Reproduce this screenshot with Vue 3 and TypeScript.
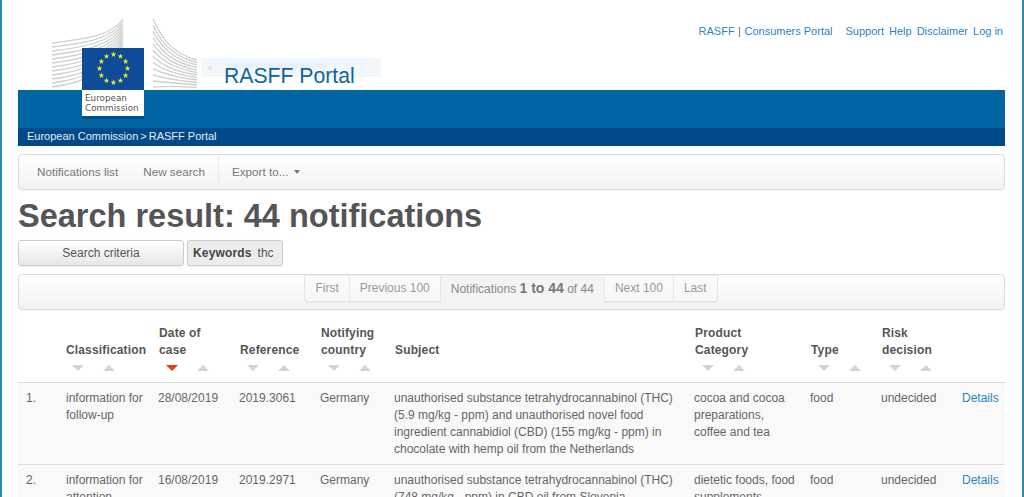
<script setup lang="ts">
interface Row { n: string; cls: string[]; date: string; ref: string; country: string; subject: string[]; cat: string[]; type: string; risk: string }
const columns = [
  { label: ['Classification'], active: false },
  { label: ['Date of', 'case'], active: true },
  { label: ['Reference'], active: false },
  { label: ['Notifying', 'country'], active: false },
  { label: ['Subject'], active: false, noSort: true },
  { label: ['Product', 'Category'], active: false },
  { label: ['Type'], active: false },
  { label: ['Risk', 'decision'], active: false },
]
const rows: Row[] = [
  {
    n: '1.', cls: ['information for', 'follow-up'], date: '28/08/2019', ref: '2019.3061', country: 'Germany',
    subject: ['unauthorised substance tetrahydrocannabinol (THC)', '(5.9 mg/kg - ppm) and unauthorised novel food', 'ingredient cannabidiol (CBD) (155 mg/kg - ppm) in', 'chocolate with hemp oil from the Netherlands'],
    cat: ['cocoa and cocoa', 'preparations,', 'coffee and tea'], type: 'food', risk: 'undecided',
  },
  {
    n: '2.', cls: ['information for', 'attention'], date: '16/08/2019', ref: '2019.2971', country: 'Germany',
    subject: ['unauthorised substance tetrahydrocannabinol (THC)', '(748 mg/kg - ppm) in CBD oil from Slovenia'],
    cat: ['dietetic foods, food', 'supplements,'], type: 'food', risk: 'undecided',
  },
]
const stars = Array.from({ length: 12 }, (_, i) => {
  const a = (i * Math.PI) / 6
  return { x: 113.5 + 14 * Math.sin(a), y: 68.5 - 14 * Math.cos(a) }
})
const lines = Array.from({ length: 12 }, (_, i) => i)
</script>

<template>
  <div class="page">
    <header class="head">
      <svg class="logo" width="160" height="112" viewBox="40 10 160 112" aria-hidden="true">
        <g fill="none" stroke="#cfcfcf" stroke-width="1.3">
          <path v-for="i in lines" :key="'l' + i" :d="`M52 ${43 + i * 4} C 85 ${39 + i * 4} 112 ${36 + i * 3} 123 ${19 + i * 2.5}`" />
          <path v-for="i in lines" :key="'r' + i" :d="`M197 ${60 + i * 2.5} C 175 ${54 + i * 2.9} 163 ${42 + i * 4} 153 ${19 + i * 6.2}`" />
        </g>
        <rect x="82" y="48" width="62" height="42" fill="#0f4c97" />
        <rect x="82" y="90" width="62" height="26" fill="#fff" />
        <rect x="82" y="116" width="62" height="3" fill="#00508f" />
        <polygon v-for="(s, i) in stars" :key="i" fill="#f4e92c"
          :transform="`translate(${s.x} ${s.y}) scale(3)`"
          points="0,-1 0.24,-0.31 0.95,-0.31 0.38,0.12 0.59,0.81 0,0.4 -0.59,0.81 -0.38,0.12 -0.95,-0.31 -0.24,-0.31" />
      </svg>
      <div class="logo-text">European<br />Commission</div>
      <div class="ghost"><span class="ghost-dot"></span><span class="ghost-bar"></span></div>
      <div class="site-title">RASFF Portal</div>
      <nav class="toplinks">
        <a>RASFF</a><span class="sep">|</span><a>Consumers Portal</a>
        <a class="gap-l">Support</a><a>Help</a><a>Disclaimer</a><a>Log in</a>
      </nav>
    </header>
    <div class="band"></div>
    <div class="crumbs">European Commission<span class="chev">&gt;</span>RASFF Portal</div>

    <div class="navbar">
      <a class="nav-item">Notifications list</a>
      <a class="nav-item second">New search</a>
      <span class="divider"></span>
      <a class="nav-item export">Export to...<span class="caret"></span></a>
    </div>

    <h1>Search result: 44 notifications</h1>

    <div class="criteria">
      <button class="btn-criteria">Search criteria</button>
      <div class="keyword"><b>Keywords</b><span>thc</span></div>
    </div>

    <div class="pager-bar">
      <div class="pager">
        <span class="pg">First</span>
        <span class="pg">Previous 100</span>
        <span class="pg current">Notifications <b>1 to 44</b> of 44</span>
        <span class="pg">Next 100</span>
        <span class="pg">Last</span>
      </div>
    </div>

    <table>
      <colgroup>
        <col class="c0" /><col class="c1" /><col class="c2" /><col class="c3" /><col class="c4" />
        <col class="c5" /><col class="c6" /><col class="c7" /><col class="c8" /><col class="c9" />
      </colgroup>
      <thead>
        <tr>
          <th></th>
          <th v-for="c in columns" :key="c.label[0]">
            <div class="th-label"><div v-for="l in c.label" :key="l">{{ l }}</div></div>
            <div class="sort" :class="{ hidden: c.noSort }">
              <span class="down" :class="{ on: c.active }"></span>
              <span class="up"></span>
            </div>
          </th>
          <th></th>
        </tr>
      </thead>
      <tbody>
        <tr v-for="r in rows" :key="r.n">
          <td>{{ r.n }}</td>
          <td><div v-for="l in r.cls" :key="l">{{ l }}</div></td>
          <td>{{ r.date }}</td>
          <td>{{ r.ref }}</td>
          <td>{{ r.country }}</td>
          <td><div v-for="l in r.subject" :key="l">{{ l }}</div></td>
          <td><div v-for="l in r.cat" :key="l">{{ l }}</div></td>
          <td>{{ r.type }}</td>
          <td>{{ r.risk }}</td>
          <td><a class="details">Details</a></td>
        </tr>
      </tbody>
    </table>
  </div>
</template>

<style>
html, body { margin: 0; height: 100%; overflow: hidden; background: #fff; }
</style>

<style scoped>
.page {
  box-sizing: border-box;
  position: relative;
  width: 1024px;
  height: 497px;
  overflow: hidden;
  padding: 0 17px 0 16px;
  border-left: 2px solid #2a8bb5;
  border-right: 2px solid #2a8bb5;
  font-family: "Liberation Sans", Arial, sans-serif;
  font-size: 12px;
  line-height: 17px;
  color: #555;
}
.head { position: relative; height: 90px; }
.logo { position: absolute; left: 22px; top: 10px; z-index: 2; }
.logo-text {
  position: absolute; left: 67px; top: 93px; z-index: 3;
  font-family: "DejaVu Sans", sans-serif; font-size: 8.8px; line-height: 10px; color: #555;
}
.ghost {
  position: absolute; left: 183px; top: 58px; width: 180px; height: 19px;
  background: #f2f7fc; display: flex; align-items: center; gap: 16px; padding-left: 7px; box-sizing: border-box;
}
.ghost-dot { width: 4px; height: 4px; background: #dbe6f0; border-radius: 50%; }
.ghost-bar { width: 99px; height: 5px; margin-top: -4px; background: #e9f0f7; }
.site-title { position: absolute; left: 206px; top: 62px; font-size: 21.2px; line-height: 27px; color: #0f65a0; }
.toplinks { position: absolute; right: 2px; top: 23px; display: flex; gap: 5px; font-size: 11px; color: #2a86bf; white-space: nowrap; }
.toplinks .sep { color: #666; margin: 0 -1.5px; }
.toplinks .gap-l { margin-left: 8px; }
.band { height: 38px; background: #0065a2; }
.crumbs { height: 18px; line-height: 17px; background: #004a8b; color: #e4edf5; padding-left: 9px; font-size: 11px; }
.chev { margin: 0 2px; }

.navbar {
  box-sizing: border-box; display: flex; align-items: center; height: 36px; margin-top: 8px;
  border: 1px solid #dcdcdc; border-radius: 4px;
  background: linear-gradient(#fff, #f2f2f2);
  color: #777; font-size: 11.7px;
  box-shadow: 0 1px 2px rgba(0, 0, 0, .05);
}
.nav-item { padding-left: 18px; padding-bottom: 2px; }
.nav-item.second { padding-left: 25px; padding-right: 13px; }
.divider { width: 1px; height: 34px; background: #ececec; }
.nav-item.export { padding-left: 13px; display: flex; align-items: center; }
.caret {
  width: 0; height: 0; margin-left: 6px; margin-top: 1px;
  border-left: 3.5px solid transparent; border-right: 3.5px solid transparent; border-top: 4px solid #777;
}
h1 { margin: 7px 0 0; height: 43px; font-size: 32.5px; line-height: 38px; font-weight: 700; color: #555; }
.criteria { display: flex; gap: 3px; height: 26px; }
.btn-criteria {
  width: 166px; height: 26px; padding: 0; border: 1px solid #ccc; border-radius: 3px;
  background: linear-gradient(#fff, #e6e6e6); font: inherit; color: #555;
  box-shadow: 0 1px 2px rgba(0, 0, 0, .08);
}
.keyword {
  box-sizing: border-box; display: flex; align-items: center; gap: 6px; height: 26px; width: 96px; padding-left: 5px;
  border: 1px solid #ccc; border-radius: 3px; background: #ececec;
  box-shadow: 0 1px 2px rgba(0, 0, 0, .08);
}
.keyword b { letter-spacing: .15px; color: #444; }
.pager-bar {
  box-sizing: border-box; position: relative; height: 36px; margin-top: 8px; border: 1px solid #dcdcdc; border-radius: 4px;
  background: linear-gradient(#fff, #f2f2f2);
  box-shadow: 0 1px 2px rgba(0, 0, 0, .05);
  display: flex; justify-content: center;
}
.pager {
  display: flex; height: 25px; margin-top: 0; margin-left: -1px;
  border: 1px solid #e4e4e4; border-top-color: #ececec; border-radius: 0 0 4px 4px;
  background: linear-gradient(#fbfbfb, #f6f6f6);
  box-shadow: 0 1px 1px rgba(0, 0, 0, .05);
  color: #999;
}
.pg { padding: 0 10px; line-height: 25px; border-left: 1px solid #e8e8e8; white-space: nowrap; }
.pg:first-child { border-left: 0; }
.pg.current { background: #f4f4f4; color: #888; height: 27px; line-height: 25px; }
.pg.current b { font-size: 14px; color: #777; }

table { width: 987px; border-collapse: collapse; table-layout: fixed; margin-top: 10px; }
.c0 { width: 40px; } .c1 { width: 92px; } .c2 { width: 81px; } .c3 { width: 81px; } .c4 { width: 74px; }
.c5 { width: 300px; } .c6 { width: 116px; } .c7 { width: 71px; } .c8 { width: 81px; } .c9 { width: 51px; }
th {
  padding: 5px 8px 8px 9px; vertical-align: bottom; text-align: left; font-weight: 700; color: #555; letter-spacing: .15px;
  border-bottom: 1px solid #ddd; white-space: nowrap;
}
th:nth-child(2) { padding-left: 8px; }
th:nth-child(2) .sort { padding-left: 6px; }
.sort { display: flex; height: 9px; margin-top: 6px; padding-left: 7px; gap: 19px; }
.sort.hidden { visibility: hidden; }
.down, .up { width: 0; height: 0; border-left: 6px solid transparent; border-right: 6px solid transparent; }
.down { border-top: 6px solid #d3d3d3; }
.down.on { border-top-color: #e5391a; }
.up { border-bottom: 6px solid #d3d3d3; }
td { padding: 7px 8px 6px; vertical-align: top; border-bottom: 1px solid #ddd; background: #f9f9f9; color: #666; white-space: nowrap; }
.details { color: #2a86bf; }
</style>
